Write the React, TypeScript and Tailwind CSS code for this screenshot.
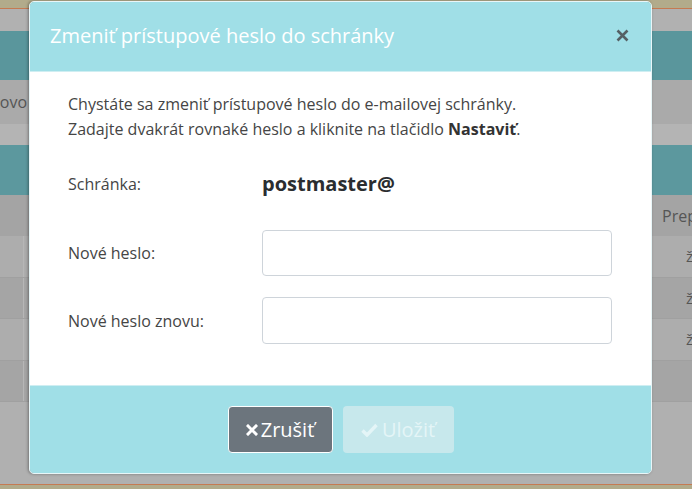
import React from "react";

function Background() {
  return (
    <div className="flex h-full w-full flex-col text-[16px] text-[#555]">
      <div className="h-[8px] bg-[#b2ab8b]" />
      <div className="h-[1px] bg-[#c57a52]" />
      <div className="h-[22px] bg-[#b1b1b1]" />
      <div className="h-[49px] bg-[#5a969c]" />
      <div className="flex h-[44px] items-center bg-[#aaaaaa]">
        <span className="-ml-[10px]">novo</span>
      </div>
      <div className="h-[21px] bg-[#b4b4b4]" />
      <div className="h-[50px] bg-[#5c989e]" />
      <div className="flex h-[41px] items-center bg-[#a4a4a4] pl-[662px]">
        <span>Prep</span>
      </div>
      {["#adadad", "#a5a5a5", "#adadad", "#a5a5a5"].map((c, i) => (
        <div key={i} className="flex h-[41.5px] border-b border-[#a0a0a0]" style={{ backgroundColor: c }}>
          <div className="w-[24px] border-r border-[#b6b6b6]" />
          <div className="flex-1" />
          <div className="flex w-[6px] items-center overflow-hidden text-[15px]">{i < 3 ? "ž" : ""}</div>
        </div>
      ))}
      <div className="flex-1 bg-[#b0b0b0]" />
      <div className="h-[1px] bg-[#c57a52]" />
      <div className="h-[4px] bg-[#b2ab8b]" />
    </div>
  );
}

export default function App() {
  return (
    <div
      className="relative h-[489px] w-[692px] overflow-hidden"
      style={{ fontFamily: '"Open Sans", "Noto Sans", sans-serif' }}
    >
      <Background />

      {/* Modal */}
      <div className="absolute left-[29px] top-[1px] flex w-[623px] flex-col overflow-hidden rounded-[5px] border border-[#e8f6f8] shadow-[-1px_0_3px_rgba(0,0,0,0.35)]">
        <div className="flex h-[70px] items-center justify-between border-b border-[#cfeef2] bg-[#a0dfe7] pl-[20px] pr-[22px]">
          <h2 className="-mt-[1px] text-[20px] text-white">Zmeniť prístupové heslo do schránky</h2>
          <svg width="13" height="13" viewBox="0 0 13 13" className="-mt-[2px]">
            <path d="M1.5 1.5 L11.5 11.5 M11.5 1.5 L1.5 11.5" stroke="#556064" strokeWidth="2.6" />
          </svg>
        </div>

        <div className="flex h-[313px] flex-col bg-white px-[38px] pt-[20px] text-[16px] text-[#454545]">
          <p className="leading-[25px]">
            Chystáte sa zmeniť prístupové heslo do e-mailovej schránky.
            <br />
            Zadajte dvakrát rovnaké heslo a kliknite na tlačidlo <b className="font-bold text-[#333]">Nastaviť</b>.
          </p>

          <div className="mt-[28px] flex h-[27px] items-center">
            <span className="w-[194px]">Schránka:</span>
            <span className="text-[20px] font-bold text-[#2a2d30]">postmaster@</span>
          </div>

          <div className="mt-[33px] flex items-center">
            <span className="w-[194px]">Nové heslo:</span>
            <input className="h-[46px] w-[350px] rounded-[4px] border border-[#ced4da] bg-white" type="password" />
          </div>

          <div className="mt-[21px] flex items-center">
            <span className="w-[194px]">Nové heslo znovu:</span>
            <input className="h-[47px] w-[350px] rounded-[4px] border border-[#ced4da] bg-white" type="password" />
          </div>
        </div>

        <div className="flex h-[88px] items-center justify-center gap-[10px] border-t border-[#cfeef2] bg-[#a0dfe7]">
          <button className="flex h-[47px] w-[105px] items-center justify-center gap-[3px] rounded-[4px] border border-white bg-[#6c757d] text-[20px] text-white">
            <svg width="12" height="12" viewBox="0 0 12 12" className="mt-[1px]">
              <path d="M2 2 L10 10 M10 2 L2 10" stroke="white" strokeWidth="3" strokeLinecap="square" />
            </svg>
            Zrušiť
          </button>
          <button className="flex h-[47px] w-[111px] items-center justify-center gap-[4px] rounded-[4px] bg-[#c7e8ec] text-[20px] text-[#e4f5f7]">
            <svg width="17" height="14" viewBox="0 0 17 14">
              <path d="M1.5 7.5 L6 12 L15.5 2" fill="none" stroke="#e4f5f7" strokeWidth="3.4" />
            </svg>
            Uložiť
          </button>
        </div>
      </div>
    </div>
  );
}
